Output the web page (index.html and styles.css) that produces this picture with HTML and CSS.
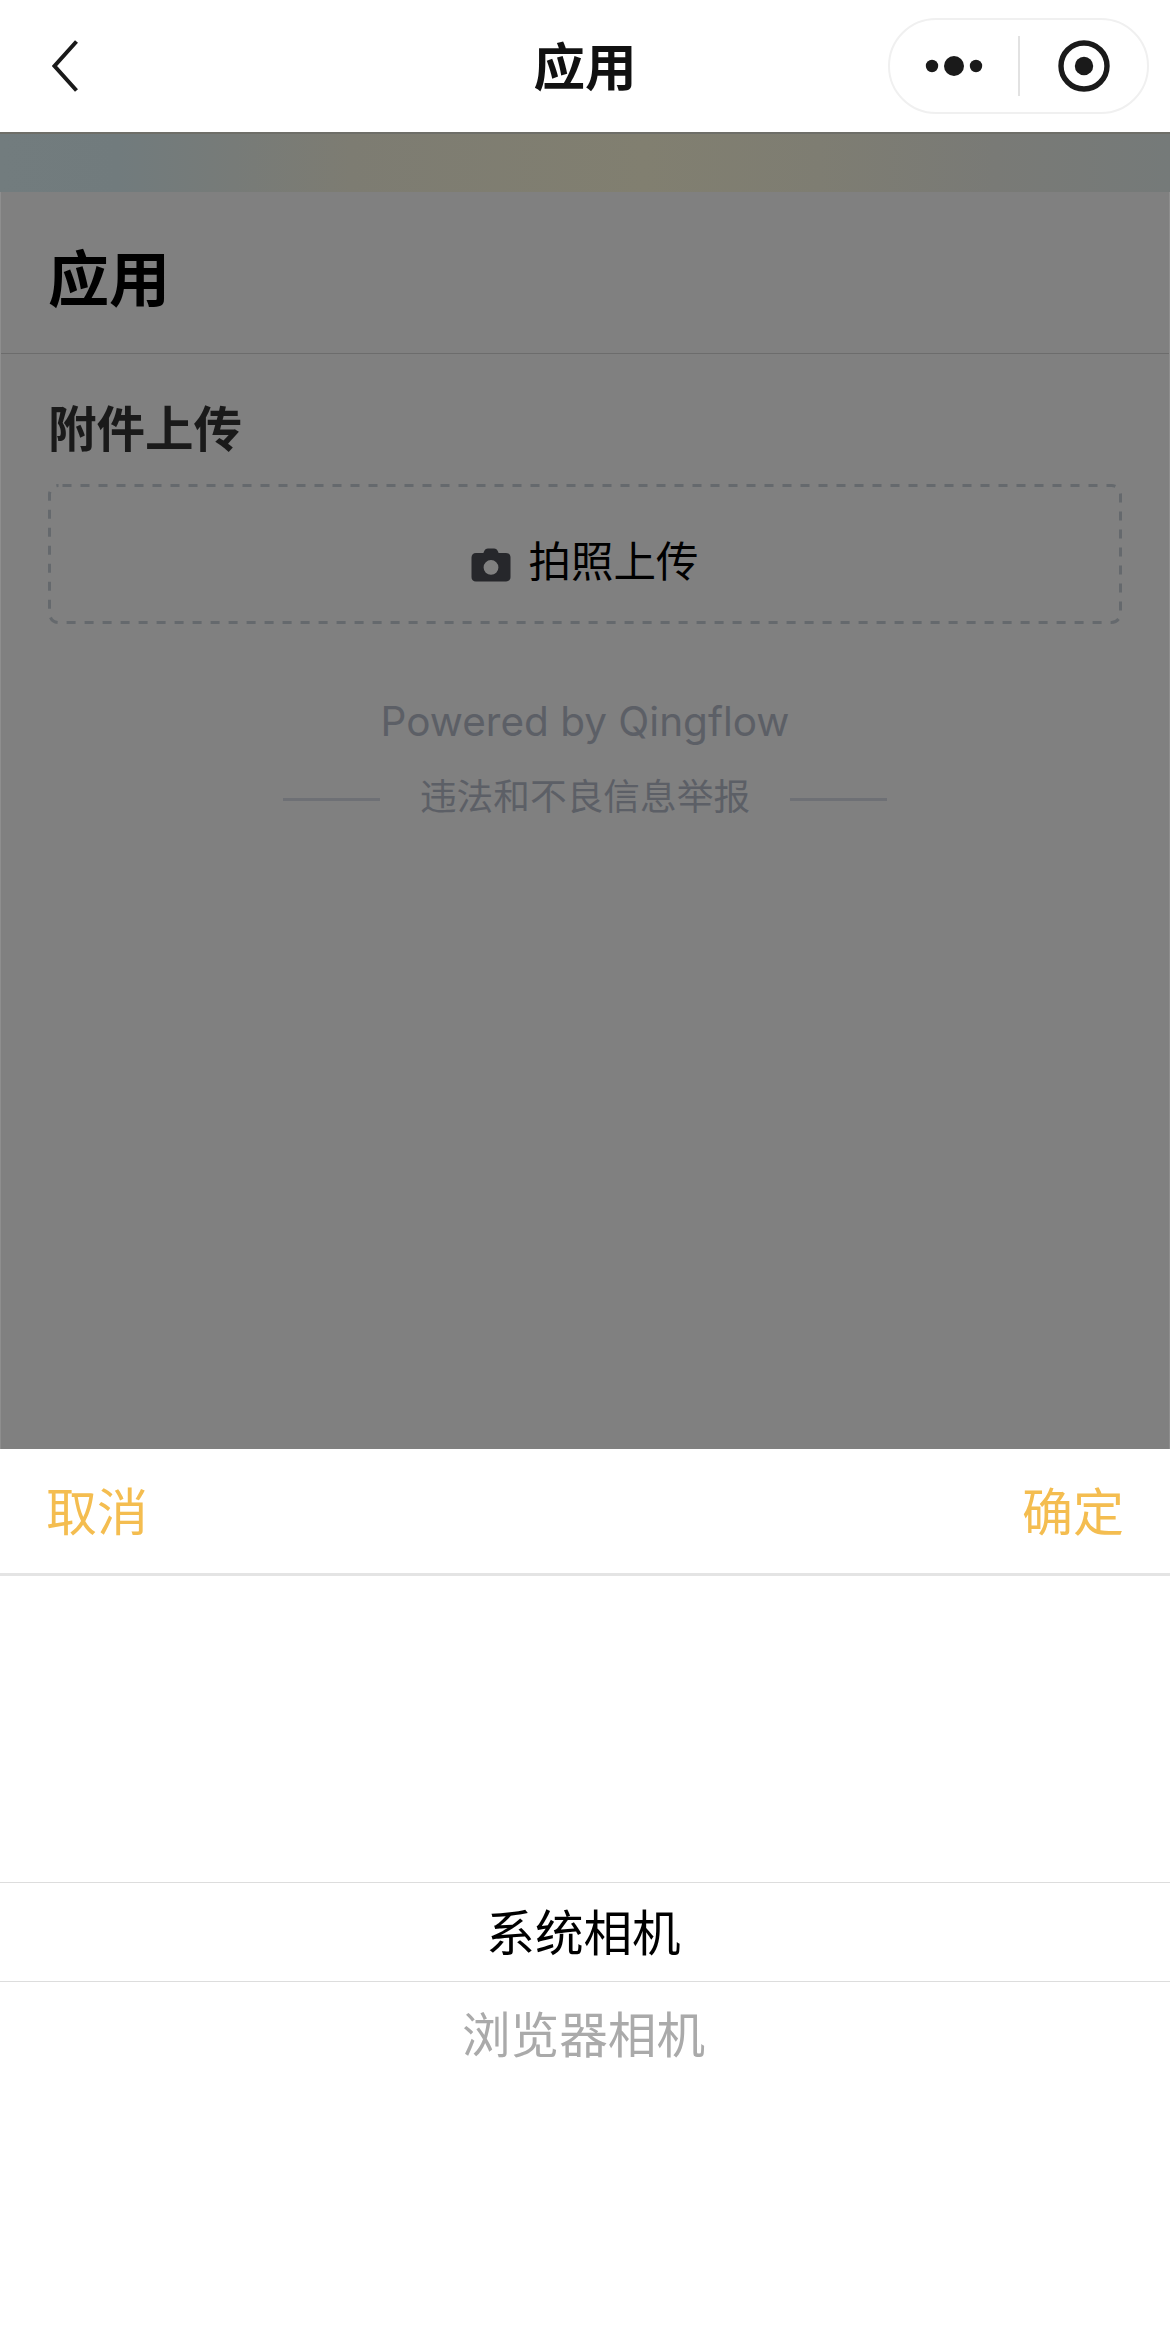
FILE: index.html
```html
<!DOCTYPE html>
<html lang="zh-CN">
<head>
  <meta charset="UTF-8">
  <title>应用</title>
  <meta name="viewport" content="width=device-width, initial-scale=1.0">
  <link rel="stylesheet" href="styles.css">
</head>

<body>
  <!-- === NAVIGATION BAR === -->
  <header class="navbar">
    <svg class="back-icon" width="26" height="52" viewBox="0 0 26 52">
      <path d="M24.5 1.5 L2.5 26 L24.5 50.5" fill="none" stroke="#1a1a1a" stroke-width="4"/>
    </svg>
    <h1 class="navbar-title">应用</h1>
    <div class="capsule">
      <svg class="capsule-more" width="66" height="24" viewBox="0 0 66 24">
        <circle cx="11" cy="12" r="6.2" fill="#1a1a1a"/>
        <circle cx="33" cy="12" r="10" fill="#1a1a1a"/>
        <circle cx="55" cy="12" r="6.2" fill="#1a1a1a"/>
      </svg>
      <span class="capsule-divider"></span>
      <svg class="capsule-target" width="52" height="52" viewBox="0 0 52 52">
        <circle cx="26" cy="26" r="23" fill="none" stroke="#1a1a1a" stroke-width="5.4"/>
        <circle cx="26" cy="26" r="9.2" fill="#1a1a1a"/>
      </svg>
    </div>
  </header>

  <!-- === DIMMED PAGE === -->
  <main class="page">
    <div class="banner"></div>
    <h2 class="page-title">应用</h2>

    <section class="form-field">
      <h3 class="field-label">附件上传</h3>
      <div class="upload-box">
        <!-- dash and gap are 9px each, longer than a css dashed border gives -->
        <svg class="upload-outline" width="1074" height="140" viewBox="0 0 1074 140">
          <rect x="1.5" y="1.5" width="1071" height="137" rx="9" fill="none" stroke="#65696d" stroke-width="3" stroke-dasharray="9 9" stroke-dashoffset="-4"/>
        </svg>
        <svg class="camera-icon" width="40" height="34" viewBox="0 0 40 34">
          <path fill-rule="evenodd" fill="#26272b" d="M13 3.5 C13.8 1.4 15 0.5 17 0.5 L23 0.5 C25 0.5 26.2 1.4 27 3.5 L27.6 5 L35 5 C37.8 5 39.5 6.8 39.5 9.5 L39.5 29 C39.5 31.8 37.8 33.5 35 33.5 L5 33.5 C2.2 33.5 0.5 31.8 0.5 29 L0.5 9.5 C0.5 6.8 2.2 5 5 5 L12.4 5 Z M20 12 A7.4 7.4 0 1 0 20 26.8 A7.4 7.4 0 1 0 20 12 Z"/>
        </svg>
        <span class="upload-text">拍照上传</span>
      </div>
    </section>

    <footer class="page-footer">
      <div class="powered">Powered by Qingflow</div>
      <div class="report">
        <span class="report-line"></span>
        <span class="report-text">违法和不良信息举报</span>
        <span class="report-line"></span>
      </div>
    </footer>
  </main>

  <!-- === CAMERA PICKER === -->
  <section class="sheet">
    <div class="sheet-bar">
      <span class="sheet-btn">取消</span>
      <span class="sheet-btn">确定</span>
    </div>
    <div class="picker">
      <div class="picker-item picker-item-selected">系统相机</div>
      <div class="picker-item">浏览器相机</div>
    </div>
  </section>
</body>
</html>
```

FILE: styles.css
```css
* {
  box-sizing: border-box;
}

body {
  margin: 0;
  height: 2329px;
  display: flex;
  flex-direction: column;
  background: #fff;
  font-family: "Noto Sans CJK SC", "Inter", sans-serif;
}

h1, h2, h3 {
  margin: 0;
}

/* === NAVIGATION BAR === */
.navbar {
  height: 132px;
  flex: none;
  display: flex;
  align-items: center;
  padding: 0 21px 0 52px;
  position: relative;
}

.back-icon {
  display: block;
}

.navbar-title {
  position: absolute;
  left: 0;
  right: 0;
  top: 0;
  text-align: center;
  font-size: 51.5px;
  line-height: 127px;
  font-weight: 700;
  color: #111;
}

.capsule {
  margin-left: auto;
  width: 261px;
  height: 96px;
  margin-top: -1px;
  display: flex;
  align-items: center;
  padding-left: 31px;
  border: 2px solid #f0f0f0;
  border-radius: 48px;
  position: relative;
  background: #fff;
}

.capsule-divider {
  width: 2px;
  height: 60px;
  margin-left: 31px;
  background: #e2e2e2;
}

.capsule-target {
  margin-left: 38px;
}

/* === DIMMED PAGE === */
.page {
  flex: 1;
  background: #808080;
  border-left: 1px solid #8e8e8e;
  border-right: 1px solid #8e8e8e;
}

.banner {
  height: 60px;
  margin: 0 -1px;
  border-top: 2px solid #6e6e68;
  background: linear-gradient(90deg, #727c7e 0%, #717b7d 10%, #777b78 20%, #7d7c72 30%, #817f70 55%, #7e7d72 70%, #797a76 85%, #757a79 100%);
}

.page-title {
  height: 162px;
  padding: 0 47px;
  font-size: 61px;
  line-height: 168px;
  font-weight: 700;
  color: #000;
  border-bottom: 1px solid #6c6c6c;
}

.form-field {
  padding: 0 47px;
}

.field-label {
  margin-top: 38px;
  font-size: 48.5px;
  line-height: 68px;
  font-weight: 700;
  color: #1a1a1a;
}

.upload-box {
  margin-top: 24px;
  height: 140px;
  padding-top: 10px;
  display: flex;
  align-items: center;
  justify-content: center;
  gap: 17px;
  position: relative;
}

.upload-outline {
  position: absolute;
  top: 0;
  left: 0;
}

.camera-icon {
  flex: none;
  margin-top: 11px;
}

.upload-text {
  font-size: 42.5px;
  line-height: 60px;
  color: #000;
}

.page-footer {
  margin-top: 68px;
  text-align: center;
  color: #5c5f66;
}

.powered {
  font-family: "Inter", sans-serif;
  font-size: 40.5px;
  line-height: 60px;
}

.report {
  margin-top: 16px;
  display: flex;
  align-items: center;
  justify-content: center;
  gap: 40px;
}

.report-line {
  width: 97px;
  height: 3px;
  margin-top: 11px;
  background: #6e7075;
}

.report-text {
  font-size: 36.7px;
  line-height: 52px;
}

/* === CAMERA PICKER === */
.sheet {
  height: 880px;
  flex: none;
  background: #fff;
}

.sheet-bar {
  height: 127px;
  display: flex;
  justify-content: space-between;
  align-items: center;
  padding: 0 46px 5px;
  border-bottom: 3px solid #e4e4e4;
}

.sheet-btn {
  font-size: 51px;
  line-height: 60px;
  color: #f4bd50;
}

.picker {
  padding-top: 306px;
}

.picker-item {
  height: 100px;
  padding-right: 3px;
  font-size: 48.6px;
  line-height: 100px;
  text-align: center;
  color: #aaa;
}

.picker-item-selected {
  line-height: 94px;
  color: #000;
  border-top: 1px solid #ddd;
  border-bottom: 1px solid #ddd;
}
```
